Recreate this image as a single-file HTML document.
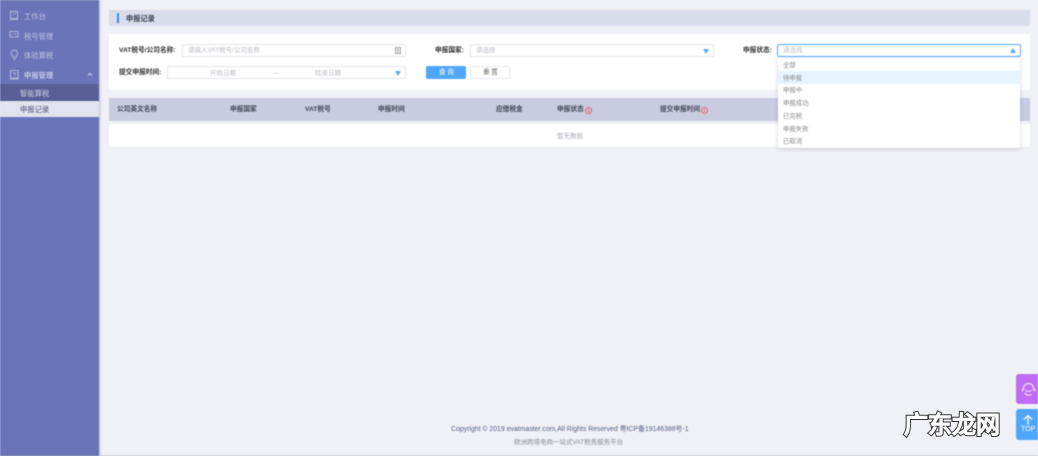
<!DOCTYPE html>
<html lang="zh">
<head>
<meta charset="utf-8">
<style>
html,body{margin:0;padding:0;width:1038px;height:456px;overflow:hidden;background:#f0f1f6;}
body{position:relative;font-family:"Liberation Sans","Noto Sans CJK SC",sans-serif;font-size:6.7px;color:#333;}
.a{position:absolute;white-space:nowrap;line-height:14px;}
.b{position:absolute;box-sizing:border-box;}
.lbl{font-weight:bold;color:#333;font-size:6.7px;}
.hd{font-weight:bold;color:#44465a;font-size:6.7px;}
.ph{color:#bcbcc4;font-size:6.5px;}
.inp{background:#fff;border:1px solid #e3e4ea;border-radius:2px;height:13px;}
.tri{position:absolute;width:0;height:0;border-left:3px solid transparent;border-right:3px solid transparent;border-top:5px solid #5aa9f5;}
.side{color:#bfc4e3;font-size:7.3px;}
.opt{position:absolute;left:5px;color:#888;white-space:nowrap;line-height:14px;font-size:6.4px;}
.ic{position:absolute;width:7px;height:7px;box-sizing:border-box;border:1px solid #e8647c;border-radius:50%;}
.ic:after{content:"";position:absolute;left:1.500px;top:.5px;width:1px;height:3px;background:#e8647c;}
#blur{position:absolute;left:0;top:0;width:1038px;height:456px;filter:blur(.4px);}
.wm{position:absolute;white-space:nowrap;left:904px;top:412px;line-height:28px;font-size:24px;font-weight:normal;font-family:'Liberation Sans','Noto Sans CJK SC',sans-serif;}
</style>
</head>
<body>
<div id="blur">
<!-- sidebar -->
<div class="b" style="left:0;top:0;width:99px;height:456px;background:#6a74b9;box-shadow:1px 0 2px rgba(60,60,90,.3)"></div>
<div class="b" style="left:0;top:84px;width:99px;height:17px;background:#575f96"></div>
<div class="b" style="left:0;top:101px;width:99px;height:16px;background:#e1e3ef"></div>

<svg class="b" style="left:9px;top:10px" width="11" height="70" viewBox="0 0 11 70" fill="none" stroke="#c5c9e6" stroke-width=".8">
<path d="M1.500 1.500h7v7h-7zM1 9.500h8M4 4h2.500"/>
<path d="M1 21.500h8v5.500h-8zM3 24h1M5 24h2"/>
<path d="M5 40a3.400 3.400 0 0 1 2 6.200v1.300h-3v-1.300a3.400 3.400 0 0 1 1-6.200zM4 49.500h2.500"/>
<path d="M1.500 60.500h7.500v7.500h-7.500zM1 69h9M4 63h2v2"/>
</svg>
<div class="a side" style="left:24px;top:10px">工作台</div>
<div class="a side" style="left:24px;top:30px">税号管理</div>
<div class="a side" style="left:24px;top:49px">体验算税</div>
<div class="a side" style="left:24px;top:69px;color:#e8eaf6">申报管理</div>
<svg class="b" style="left:87px;top:72px" width="6" height="5" viewBox="0 0 6 5" fill="none" stroke="#cdd1ea" stroke-width="1"><path d="M1 3.500L3 1.500L5 3.500"/></svg>
<div class="a side" style="left:20px;top:87px;color:#cfd2e8">智能算税</div>
<div class="a side" style="left:20px;top:103px;color:#4a4e70">申报记录</div>

<!-- title bar -->
<div class="b" style="left:109px;top:10px;width:921px;height:16px;background:#d9dcea"></div>
<div class="b" style="left:117px;top:13px;width:2px;height:10px;background:#2e8ff0"></div>
<div class="a hd" style="left:126px;top:12px;color:#3c3f55;font-size:7.200px">申报记录</div>

<!-- filter panel -->
<div class="b" style="left:109px;top:34px;width:921px;height:56px;background:#fff"></div>
<div class="a lbl" style="left:119px;top:44px">VAT税号/公司名称:</div>
<div class="b inp" style="left:182px;top:44px;width:224px"></div>
<div class="a ph" style="left:188px;top:44px">请输入VAT税号/公司名称</div>
<svg class="b" style="left:395px;top:47px" width="6" height="7" viewBox="0 0 6 7" fill="none" stroke="#888" stroke-width=".8"><path d="M.5.500h5v6h-5zM2 2h2M2 3.500h2M2 5h2"/></svg>

<div class="a lbl" style="left:119px;top:66px">提交申报时间:</div>
<div class="b inp" style="left:167px;top:66px;width:239px"></div>
<div class="a ph" style="left:210px;top:67px">开始日期</div>
<div class="a" style="left:274px;top:67px;color:#999">–</div>
<div class="a ph" style="left:315px;top:67px">结束日期</div>
<div class="tri" style="left:395px;top:71px"></div>

<div class="a lbl" style="left:435px;top:44px">申报国家:</div>
<div class="b inp" style="left:470px;top:44px;width:244px"></div>
<div class="a ph" style="left:476px;top:44px">请选择</div>
<div class="tri" style="left:703px;top:49px"></div>

<div class="b" style="left:426px;top:66px;width:40px;height:13px;background:#4fa7fb;border-radius:2px"></div>
<div class="a" style="left:439px;top:66px;color:#fff;letter-spacing:1.500px">查询</div>
<div class="b" style="left:470px;top:66px;width:40px;height:13px;background:#fff;border:1px solid #e8e9ef;border-radius:2px"></div>
<div class="a" style="left:483px;top:66px;color:#666;letter-spacing:1.500px">重置</div>

<!-- table -->
<div class="b" style="left:109px;top:98px;width:921px;height:23px;background:#c9cbe0"></div>
<div class="b" style="left:109px;top:124px;width:921px;height:24px;background:#fff;border-bottom:1px solid #e9eaf0"></div>
<div class="a hd" style="left:117px;top:103px">公司英文名称</div>
<div class="a hd" style="left:230px;top:103px">申报国家</div>
<div class="a hd" style="left:305px;top:103px">VAT税号</div>
<div class="a hd" style="left:378px;top:103px">申报时间</div>
<div class="a hd" style="left:496px;top:103px">应缴税金</div>
<div class="a hd" style="left:557px;top:103px">申报状态</div>
<div class="ic" style="left:585px;top:107px"></div>
<div class="a hd" style="left:660px;top:103px">提交申报时间</div>
<div class="ic" style="left:701px;top:107px"></div>
<div class="a" style="left:557px;top:130px;color:#a9abb5;font-size:6.500px">暂无数据</div>

<!-- status select -->
<div class="a lbl" style="left:743px;top:44px">申报状态:</div>
<div class="b" style="left:777px;top:44px;width:244px;height:13px;background:#fff;border:1px solid #4fa7fb;border-radius:2px"></div>
<div class="a ph" style="left:783px;top:44px">请选择</div>
<div class="tri" style="left:1010px;top:48px;border-top:0;border-bottom:5px solid #5aa9f5"></div>

<div class="b" style="left:778px;top:58px;width:242px;height:90px;background:#fff;border-radius:2px;box-shadow:0 1px 4px rgba(70,70,100,.25)">
<div class="b" style="left:0;top:13px;width:242px;height:13px;background:#e6f5fd"></div>
<div class="opt" style="top:1px">全部</div>
<div class="opt" style="top:14px">待申报</div>
<div class="opt" style="top:26px">申报中</div>
<div class="opt" style="top:39px">申报成功</div>
<div class="opt" style="top:52px">已完税</div>
<div class="opt" style="top:65px">申报失败</div>
<div class="opt" style="top:77px">已取消</div>
</div>

<!-- footer -->
<div class="a" style="left:451px;top:423px;color:#55608c;font-size:6.900px">Copyright © 2019 evatmaster.com,All Rights Reserved 粤ICP备19146388号-1</div>
<div class="a" style="left:514px;top:436px;color:#8a8c98;font-size:6.500px">欧洲跨境电商一站式VAT税务服务平台</div>
<div class="b" style="left:99px;top:455px;width:939px;height:1px;background:#c9c9cf"></div>

<!-- float buttons -->
<div class="b" style="left:1016px;top:374px;width:22px;height:30px;background:#c06cf2;border-radius:3px 0 0 3px"></div>
<svg class="b" style="left:1021px;top:382px" width="15" height="15" viewBox="0 0 15 15" fill="none" stroke="#f2dcfc" stroke-width="1.200"><path d="M2.500 8V6.500a5 5 0 0 1 10 0V8M1.500 6.500v3M13.500 6.500v3M3.500 11c2 2.500 5 2.500 7.500 1.500"/><path d="M4.500 8.500c2 1.200 4 1.200 6 0"/></svg>
<div class="b" style="left:1016px;top:409px;width:22px;height:31px;background:#4fa7fb;border-radius:3px 0 0 3px"></div>
<svg class="b" style="left:1022px;top:414px" width="12" height="11" viewBox="0 0 12 11" fill="none" stroke="#fff" stroke-width="1.300"><path d="M2 5.500L6 1.500L10 5.500M6 1.500V10.500"/></svg>
<div class="a" style="left:1021px;top:423px;color:#fff;font-size:7px">TOP</div>
</div>

<!-- watermark -->
<div class="wm" style="color:#333;-webkit-text-stroke:3.500px #333">广东龙网</div>
<div class="wm" style="color:#fff;-webkit-text-stroke:1.500px #fff">广东龙网</div>
</body>
</html>
